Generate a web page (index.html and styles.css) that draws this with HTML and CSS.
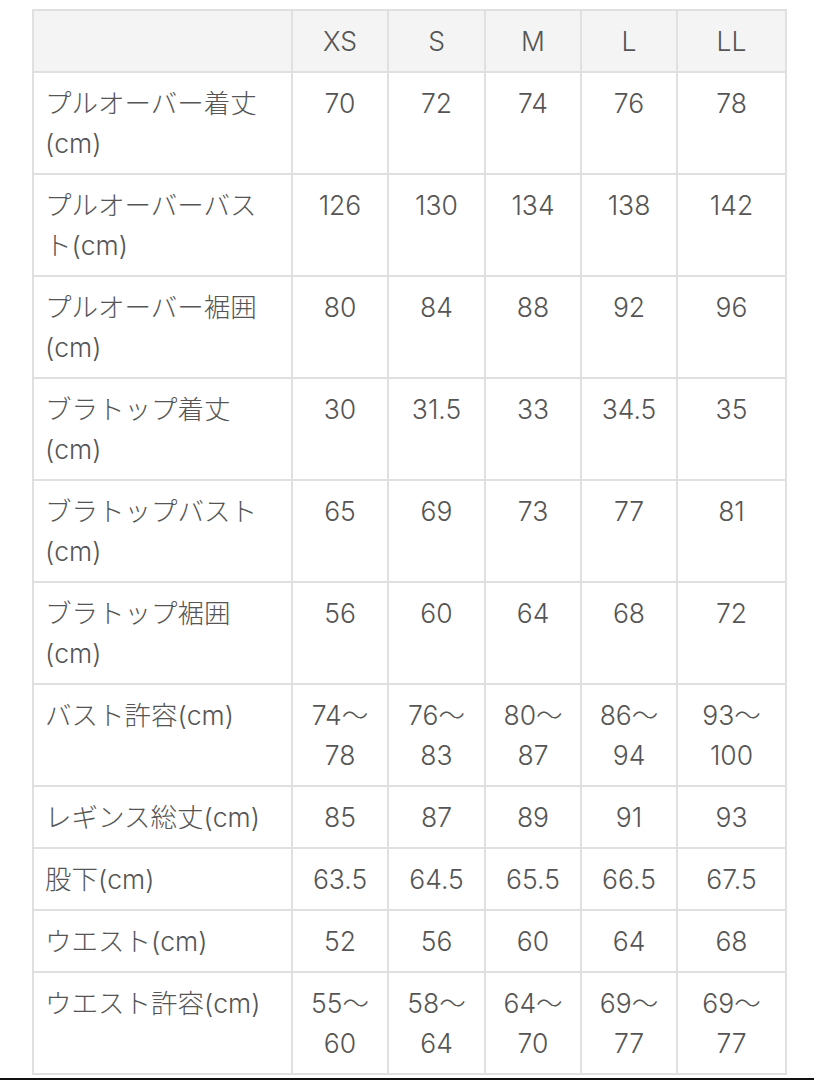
FILE: index.html
```html
<!DOCTYPE html>
<html lang="ja">
<head>
<meta charset="utf-8">
<link rel="stylesheet" href="styles.css">
</head>
<body>
<table class="size-table">
  <colgroup>
    <col class="c-label">
    <col class="c-s1">
    <col class="c-s2">
    <col class="c-s1">
    <col class="c-s1">
    <col class="c-last">
  </colgroup>
  <thead>
    <tr><th></th><th>XS</th><th>S</th><th>M</th><th>L</th><th>LL</th></tr>
  </thead>
  <tbody>
    <tr><td class="label">プルオーバー着丈(cm)</td><td>70</td><td>72</td><td>74</td><td>76</td><td>78</td></tr>
    <tr><td class="label">プルオーバーバスト(cm)</td><td>126</td><td>130</td><td>134</td><td>138</td><td>142</td></tr>
    <tr><td class="label">プルオーバー裾囲(cm)</td><td>80</td><td>84</td><td>88</td><td>92</td><td>96</td></tr>
    <tr><td class="label">ブラトップ着丈(cm)</td><td>30</td><td>31.5</td><td>33</td><td>34.5</td><td>35</td></tr>
    <tr><td class="label">ブラトップバスト(cm)</td><td>65</td><td>69</td><td>73</td><td>77</td><td>81</td></tr>
    <tr><td class="label">ブラトップ裾囲(cm)</td><td>56</td><td>60</td><td>64</td><td>68</td><td>72</td></tr>
    <tr><td class="label">バスト許容(cm)</td><td>74〜<wbr>78</td><td>76〜<wbr>83</td><td>80〜<wbr>87</td><td>86〜<wbr>94</td><td>93〜<wbr>100</td></tr>
    <tr><td class="label">レギンス総丈(cm)</td><td>85</td><td>87</td><td>89</td><td>91</td><td>93</td></tr>
    <tr><td class="label">股下(cm)</td><td>63.5</td><td>64.5</td><td>65.5</td><td>66.5</td><td>67.5</td></tr>
    <tr><td class="label">ウエスト(cm)</td><td>52</td><td>56</td><td>60</td><td>64</td><td>68</td></tr>
    <tr><td class="label">ウエスト許容(cm)</td><td>55〜<wbr>60</td><td>58〜<wbr>64</td><td>64〜<wbr>70</td><td>69〜<wbr>77</td><td>69〜<wbr>77</td></tr>
  </tbody>
</table>
</body>
</html>
```
FILE: styles.css
```css
html {
  background: #111;
}
body {
  margin: 0;
  padding: 9px 0 3px 32px;
  background: #fff;
  font-family: Inter, "Noto Sans CJK JP", sans-serif;
  color: #555;
}
.size-table {
  border-collapse: collapse;
  table-layout: fixed;
  width: 754px;
  font-size: 26.5px;
  line-height: 40px;
}
.c-label { width: 259px; }
.c-s1 { width: 96px; }
.c-s2 { width: 97px; }
.c-last { width: 109px; }
.size-table th,
.size-table td {
  border: 2px solid #e0e0e0;
  padding: 10px 10px;
  text-align: center;
  vertical-align: top;
  font-weight: 300;
}
.size-table thead th {
  background: #f4f4f4;
}
.size-table td.label {
  text-align: left;
  padding-left: 11px;
}
```
